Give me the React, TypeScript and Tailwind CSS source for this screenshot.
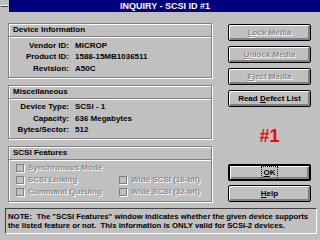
import React from "react";

const DEVICE_INFO = [
  { label: "Vendor ID:", value: "MICROP" },
  { label: "Product ID:", value: "1588-15MB1036511" },
  { label: "Revision:", value: "A50C" },
];

const MISC_INFO = [
  { label: "Device Type:", value: "SCSI - 1" },
  { label: "Capacity:", value: "636 Megabytes" },
  { label: "Bytes/Sector:", value: "512" },
];

function GroupBox({ title, children, className }: { title: string; children: React.ReactNode; className?: string }) {
  return (
    <div
      className={`flex flex-col border border-[#808080] shadow-[inset_1px_1px_0_#fff,1px_1px_0_#fff] ${className ?? ""}`}
    >
      <div className="h-[12px] leading-[12px] pl-[4px]">{title}</div>
      <div className="border-b border-[#808080] shadow-[0_1px_0_#fff]" />
      {children}
    </div>
  );
}

function InfoRows({ rows }: { rows: { label: string; value: string }[] }) {
  return (
    <div className="grid grid-cols-[60px_1fr] gap-x-[6px] pt-[2.5px] leading-[11.5px]">
      {rows.map((r) => (
        <React.Fragment key={r.label}>
          <span className="text-right whitespace-nowrap">{r.label}</span>
          <span className="whitespace-nowrap">{r.value}</span>
        </React.Fragment>
      ))}
    </div>
  );
}

function Check({ label }: { label: string }) {
  return (
    <div className="flex items-center h-[12px] gap-[4px] whitespace-nowrap">
      <span className="w-[8px] h-[8px] border border-[#808080] shadow-[1px_1px_0_#fff]" />
      <span className="text-[#8a8a8a] [text-shadow:1px_1px_0_#fff]">{label}</span>
    </div>
  );
}

function Btn({
  children,
  disabled,
  isDefault,
}: {
  children: React.ReactNode;
  disabled?: boolean;
  isDefault?: boolean;
}) {
  return (
    <div
      className={`h-[17px] flex items-center justify-center rounded-[2px] border-black shadow-[inset_1px_1px_0_#fff,inset_-2px_-2px_0_#808080] ${
        isDefault ? "border-2" : "border"
      } ${disabled ? "text-[#8a8a8a] [text-shadow:1px_1px_0_#fff]" : "text-black"}`}
    >
      {children}
    </div>
  );
}

export default function App() {
  return (
    <div className="w-[320px] h-[240px] overflow-hidden bg-[#c0c0c0] text-black text-[8px] font-bold font-['Liberation_Sans',Arial,sans-serif] flex flex-col">
      {/* Title bar */}
      <div className="h-[12px] flex shrink-0">
        <div className="w-[10px] bg-[#c0c0c0] border-r border-black flex items-center justify-center">
          <div className="w-[7px] h-[2px] bg-white border-b border-[#404040]" />
        </div>
        <div className="flex-1 bg-[#000080] text-white text-[9px] leading-[12px] text-center">
          INQUIRY - SCSI ID #1
        </div>
      </div>

      {/* Body */}
      <div className="flex pt-[11px] pl-[8px] h-[190px] shrink-0">
        <div className="w-[204px] flex flex-col gap-[7px]">
          <GroupBox title="Device Information" className="h-[55px]">
            <InfoRows rows={DEVICE_INFO} />
          </GroupBox>
          <GroupBox title="Miscellaneous" className="h-[55px]">
            <InfoRows rows={MISC_INFO} />
          </GroupBox>
          <GroupBox title="SCSI Features" className="h-[56px]">
            <div className="grid grid-cols-[103px_1fr] pl-[7px] pt-[2px]">
              <div className="flex flex-col">
                <Check label="Synchronous Mode" />
                <Check label="SCSI Linking" />
                <Check label="Command Queuing" />
              </div>
              <div className="flex flex-col pt-[12px]">
                <Check label="Wide SCSI (16-bit)" />
                <Check label="Wide SCSI (32-bit)" />
              </div>
            </div>
          </GroupBox>
        </div>

        <div className="w-[83px] ml-[16px] pt-[1px] flex flex-col">
          <div className="flex flex-col gap-[5px]">
            <Btn disabled>
              <u>L</u>ock Media
            </Btn>
            <Btn disabled>
              <u>U</u>nlock Media
            </Btn>
            <Btn disabled>
              <u>E</u>ject Media
            </Btn>
            <Btn>
              Read&nbsp;<u>D</u>efect List
            </Btn>
          </div>
          <div className="h-[57px] flex items-center justify-center text-[18px] text-[#ff0000] leading-none">
            #1
          </div>
          <div className="flex flex-col gap-[4px]">
            <Btn isDefault>
              <span className="px-[1px] outline outline-1 outline-dotted outline-black">
                <u>O</u>K
              </span>
            </Btn>
            <Btn>
              <u>H</u>elp
            </Btn>
          </div>
        </div>
      </div>

      {/* Note */}
      <div className="mt-[6px] ml-[5px] w-[312px] h-[26px] shrink-0 border border-[#404040] border-r-white border-b-white pl-[2px] pt-[3px] text-[7.75px] leading-[9px] whitespace-pre">
        {'NOTE:  The "SCSI Features" window indicates whether the given device supports\nthe listed feature or not.  This information is ONLY valid for SCSI-2 devices.'}
      </div>
    </div>
  );
}
